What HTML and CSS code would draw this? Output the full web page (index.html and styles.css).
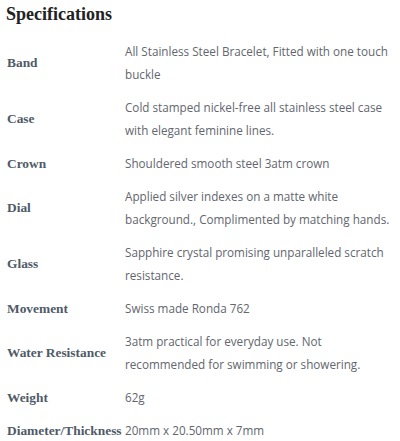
FILE: index.html
```html
<!DOCTYPE html>
<html>
<head>
<meta charset="utf-8">
<link rel="stylesheet" href="styles.css">
</head>
<body>
<div class="specs">
  <h2 class="title">Specifications</h2>
  <div class="table">
    <div class="label">Band</div>
    <div class="value">All Stainless Steel Bracelet, Fitted with one touch buckle</div>
    <div class="label">Case</div>
    <div class="value">Cold stamped nickel-free all stainless steel case with elegant feminine lines.</div>
    <div class="label">Crown</div>
    <div class="value">Shouldered smooth steel 3atm crown</div>
    <div class="label">Dial</div>
    <div class="value">Applied silver indexes on a matte white background., Complimented by matching hands.</div>
    <div class="label">Glass</div>
    <div class="value">Sapphire crystal promising unparalleled scratch resistance.</div>
    <div class="label">Movement</div>
    <div class="value">Swiss made Ronda 762</div>
    <div class="label">Water Resistance</div>
    <div class="value">3atm practical for everyday use. Not recommended for swimming or showering.</div>
    <div class="label">Weight</div>
    <div class="value">62g</div>
    <div class="label">Diameter/Thickness</div>
    <div class="value">20mm x 20.50mm x 7mm</div>
  </div>
</div>
</body>
</html>
```

FILE: styles.css
```css
html, body {
  margin: 0;
  padding: 0;
  background: #ffffff;
}

.specs {
  padding: 0 4px 0 6px;
  width: 400px;
  box-sizing: border-box;
}

.title {
  margin: 0 0 7px 0;
  font-family: "Liberation Serif", serif;
  font-weight: bold;
  font-size: 18px;
  line-height: 28px;
  color: #222222;
}

.table {
  display: grid;
  grid-template-columns: 119px 1fr;
}

.label {
  display: flex;
  align-items: center;
  padding: 5px 0 5px 1px;
  font-family: "Liberation Serif", serif;
  font-weight: bold;
  font-size: 13.4px;
  color: #4f5a68;
  white-space: nowrap;
}

.value {
  padding: 5px 0;
  font-family: "Open Sans", sans-serif;
  font-size: 11.7px;
  line-height: 23px;
  color: #62666e;
}
```
